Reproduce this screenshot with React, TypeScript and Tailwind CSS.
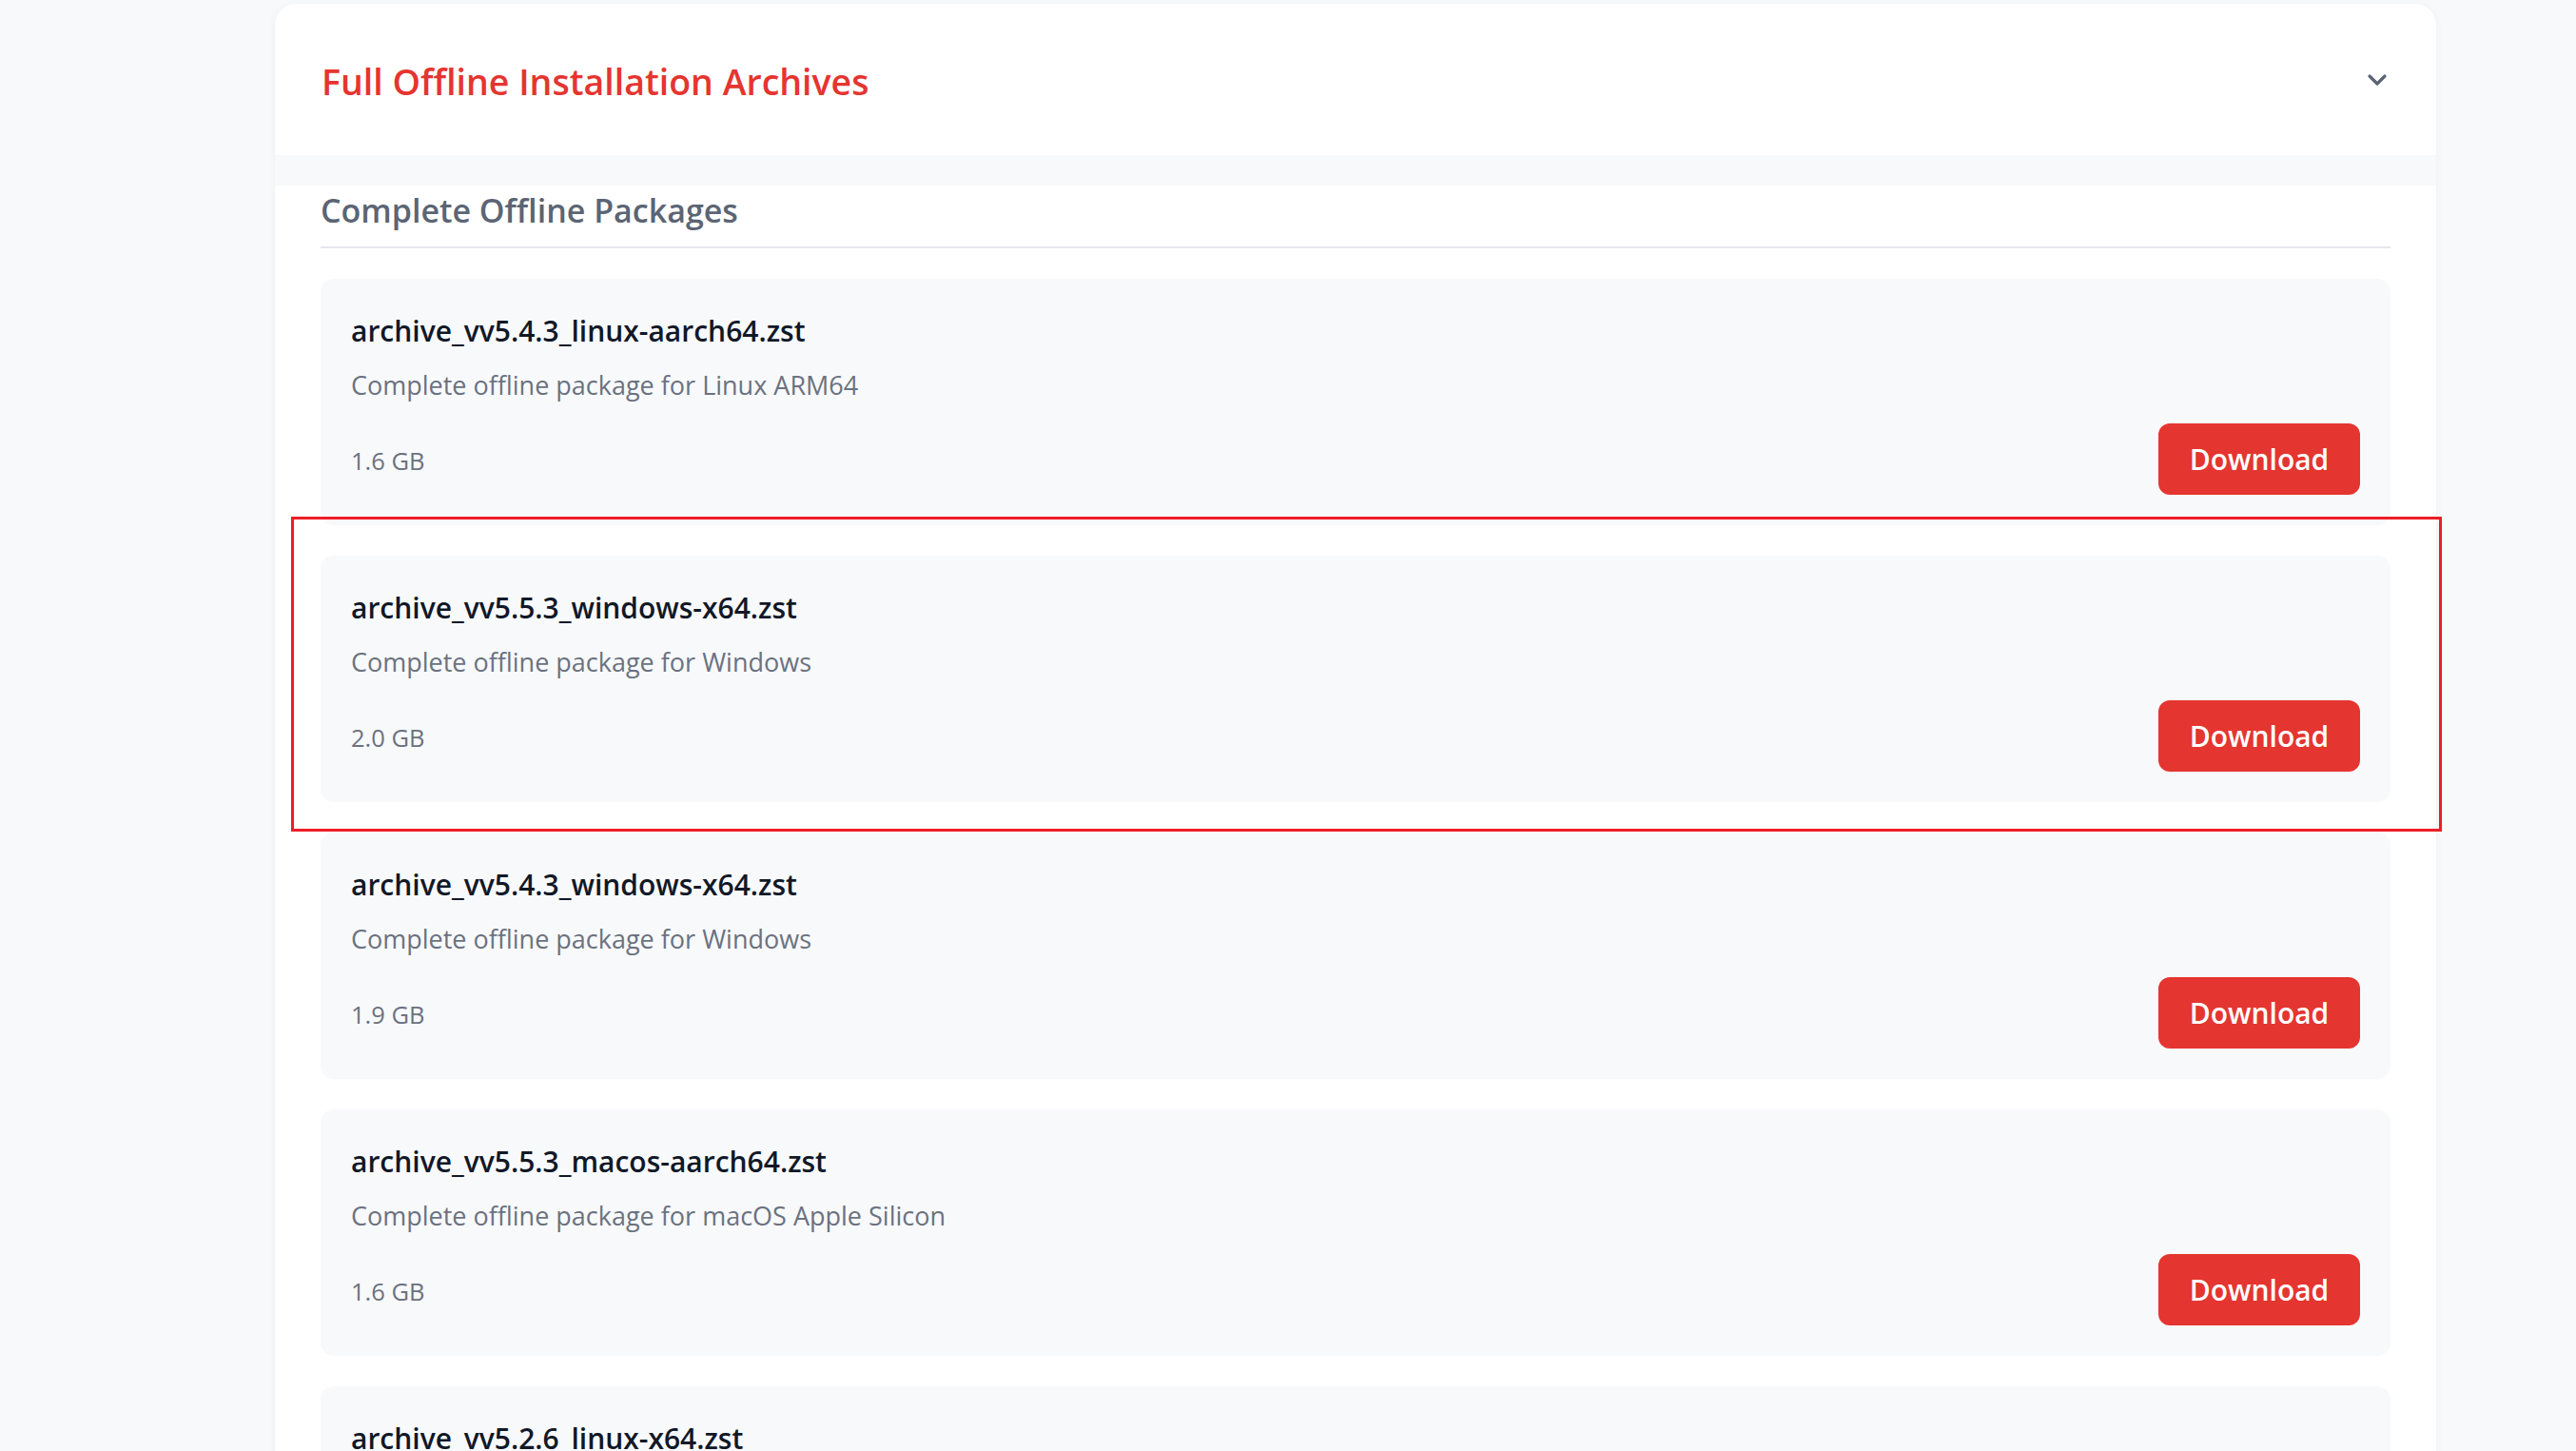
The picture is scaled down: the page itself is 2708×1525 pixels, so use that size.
import { ChevronDown } from 'lucide-react';

interface ArchiveItem {
    name: string;
    description: string;
    size: string;
}

const archives: ArchiveItem[] = [
    { name: 'archive_vv5.4.3_linux-aarch64.zst', description: 'Complete offline package for Linux ARM64', size: '1.6 GB' },
    { name: 'archive_vv5.5.3_windows-x64.zst', description: 'Complete offline package for Windows', size: '2.0 GB' },
    { name: 'archive_vv5.4.3_windows-x64.zst', description: 'Complete offline package for Windows', size: '1.9 GB' },
    { name: 'archive_vv5.5.3_macos-aarch64.zst', description: 'Complete offline package for macOS Apple Silicon', size: '1.6 GB' },
    { name: 'archive_vv5.2.6_linux-x64.zst', description: 'Complete offline package for Linux x64', size: '1.5 GB' },
];

function ArchiveCard({ item }: { item: ArchiveItem }) {
    return (
        <div className="bg-[#f8f9fb] rounded-[14px] p-[32px]">
            <div className="text-[30px] leading-[46px] font-semibold text-[#111827]">{item.name}</div>
            <div className="mt-[14px] text-[27px] leading-[40px] text-[#6b7280]">{item.description}</div>
            <div className="mt-[20px] flex items-center justify-between">
                <span className="text-[25.5px] text-[#6b7280] mt-[4px]">{item.size}</span>
                <button className="h-[75px] w-[212px] rounded-[12px] bg-[#e53530] text-white text-[30px] font-semibold">
                    Download
                </button>
            </div>
        </div>
    );
}

export default function App() {
    return (
        <div className="relative min-h-screen bg-[#f8f9fb] font-['Open_Sans',sans-serif]">
            <div className="ml-[289px] w-[2272px] pt-[4px]">
                <div className="bg-white rounded-[22px] shadow-[0_1px_8px_rgba(0,0,0,0.05)] overflow-hidden">
                    {/* Header */}
                    <div className="h-[159px] flex items-center justify-between pl-[49px] pr-[46px]">
                        <h2 className="mt-[6px] text-[37.5px] font-semibold text-[#e53530]">Full Offline Installation Archives</h2>
                        <ChevronDown className="w-[32px] h-[32px] text-[#5a6474]" strokeWidth={2.4} />
                    </div>
                    <div className="h-[32px] bg-[#f8f9fb]" />

                    {/* Body */}
                    <div className="px-[48px] pb-[40px]">
                        <h3 className="text-[34px] leading-[52px] font-semibold text-[#5b6574] pb-[12px] border-b-2 border-[#e5e7eb]">
                            Complete Offline Packages
                        </h3>
                        <div className="mt-[32px] flex flex-col gap-[32px]">
                            {archives.map((item) => (
                                <ArchiveCard key={item.name} item={item} />
                            ))}
                        </div>
                    </div>
                </div>
            </div>

            {/* highlight annotation */}
            <div className="absolute left-[306px] top-[543px] w-[2261px] h-[331px] border-[3px] border-[#ee1d26] pointer-events-none" />
        </div>
    );
}
